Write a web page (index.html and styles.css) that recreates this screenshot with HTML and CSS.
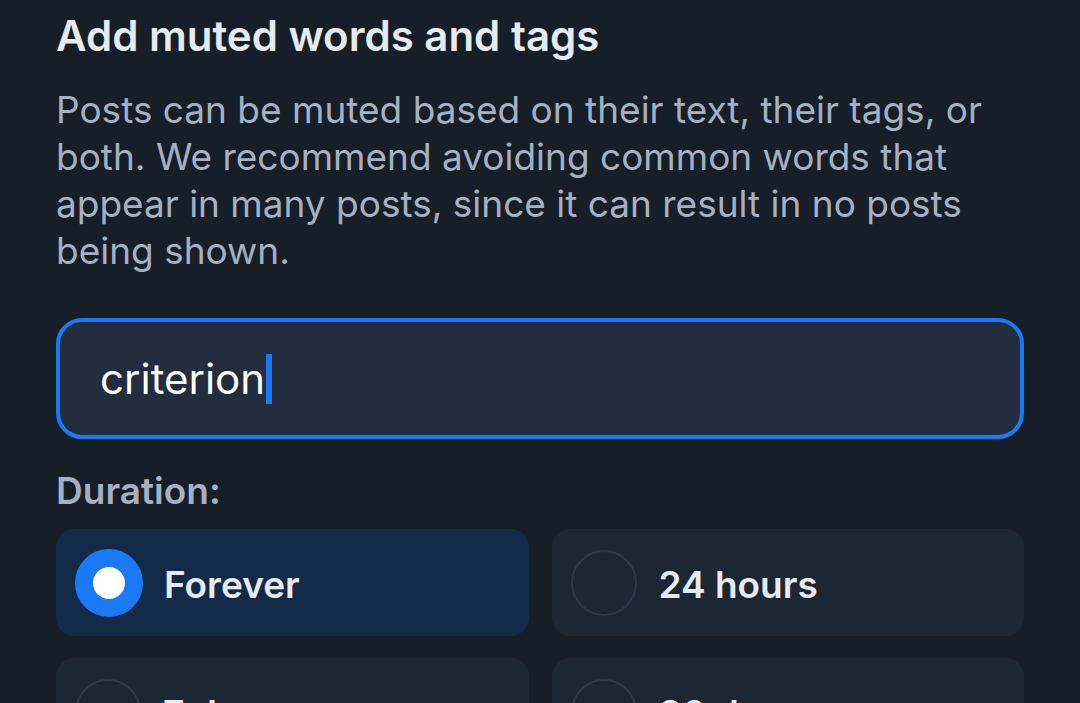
FILE: index.html
```html
<!DOCTYPE html>
<html lang="en">
<head>
  <meta charset="UTF-8" />
  <title>Add muted words and tags</title>
  <meta name="viewport" content="width=device-width, initial-scale=1.0"/>
  <link rel="stylesheet" href="styles.css">
</head>
<body>

  <!-- Muted words dialog -->
  <div class="dialog">
    <h2 class="title">Add muted words and tags</h2>
    <p class="desc">Posts can be muted based on their text, their tags, or both. We recommend avoiding common words that appear in many posts, since it can result in no posts being shown.</p>

    <div class="field">
      <span class="value">criterion</span><span class="caret"></span>
    </div>

    <div class="label">Duration:</div>
    <div class="options">
      <div class="option selected"><span class="radio"></span><span class="text">Forever</span></div>
      <div class="option"><span class="radio"></span><span class="text">24 hours</span></div>
      <div class="option"><span class="radio"></span><span class="text">7 days</span></div>
      <div class="option"><span class="radio"></span><span class="text">30 days</span></div>
    </div>
  </div>

</body>
</html>
```

FILE: styles.css
```css
body {
  margin: 0; background: #161e27;
  font-family: 'Inter', 'Roboto', sans-serif;
  overflow: hidden;
}
.dialog { padding: 0 56px; }

.title {
  margin: 0; padding-top: 11px;
  font-size: 42px; font-weight: 600; color: #e6ebf2;
  line-height: 50px;
}
.desc {
  margin: 25px 0 0; font-size: 37px; line-height: 47px;
  color: #a5b1c2;
}

.field {
  margin-top: 44px; height: 113px;
  background: #222d3e; border: 4px solid #1a79f5; border-radius: 26px;
  display: flex; align-items: center; padding: 0 40px;
  font-size: 42px; color: #fff;
}
.caret {
  display: inline-block; width: 6px; height: 50px;
  background: #1a79f5; margin-left: 1px;
}

.label {
  margin-top: 30px; font-size: 37px; font-weight: 600;
  color: #a5b1c2; line-height: 44px;
}
.options {
  margin-top: 16px;
  display: grid; grid-template-columns: 1fr 1fr; gap: 22px 23px;
}
.option {
  height: 107px; border-radius: 18px; background: #1c2734;
  display: flex; align-items: center; padding-left: 19px;
  font-size: 37px; font-weight: 600; color: #e6ebf2;
}
.option .text { padding-top: 4px; }
.option.selected { background: #132948; }
.radio {
  width: 66px; height: 66px; box-sizing: border-box;
  border: 2px solid #2d3a4b; border-radius: 50%;
  margin-right: 22px; flex-shrink: 0;
}
.option.selected .radio {
  background: #fff; border: 18px solid #1a79f5;
  width: 68px; height: 68px; margin-right: 21px;
}
```
